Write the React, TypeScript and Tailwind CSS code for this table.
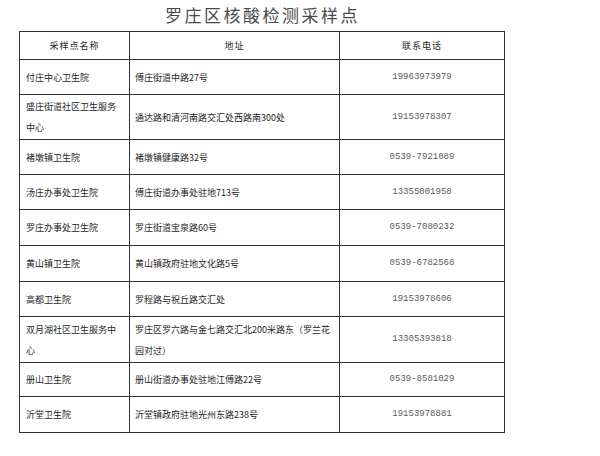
const rows: { name: string; addr: string; tel: string; h: string }[] = [
  { name: "付庄中心卫生院", addr: "傅庄街道中路27号", tel: "19963973979", h: "h-[35px]" },
  { name: "盛庄街道社区卫生服务中心", addr: "通达路和清河南路交汇处西路南300处", tel: "19153978307", h: "h-[45px]" },
  { name: "褚墩镇卫生院", addr: "褚墩镇健康路32号", tel: "0539-7921089", h: "h-[35px]" },
  { name: "汤庄办事处卫生院", addr: "傅庄街道办事处驻地713号", tel: "13355001958", h: "h-[35px]" },
  { name: "罗庄办事处卫生院", addr: "罗庄街道宝泉路60号", tel: "0539-7080232", h: "h-[36px]" },
  { name: "黄山镇卫生院", addr: "黄山镇政府驻地文化路5号", tel: "0539-6782568", h: "h-[36px]" },
  { name: "高都卫生院", addr: "罗程路与祝丘路交汇处", tel: "19153978606", h: "h-[35px]" },
  { name: "双月湖社区卫生服务中心", addr: "罗庄区罗六路与金七路交汇北200米路东（罗兰花园对过）", tel: "13305393818", h: "h-[46px]" },
  { name: "册山卫生院", addr: "册山街道办事处驻地江傅路22号", tel: "0539-8581029", h: "h-[34px]" },
  { name: "沂堂卫生院", addr: "沂堂镇政府驻地光州东路238号", tel: "19153978881", h: "h-[36px]" },
];

export default function App() {
  return (
    <div className="w-[600px] h-[456px] bg-white text-[#262626] font-['Noto_Sans_CJK_SC',sans-serif]">
      <div className="ml-[19px] w-[485px]">
        <div className="h-[31px] pl-[2px] text-center text-[17px] leading-[30px] tracking-[2.5px] text-[#4a4a4a]">
          罗庄区核酸检测采样点
        </div>
        <table className="w-[485px] table-fixed border-collapse border border-[#2a2a2a] text-[9px] leading-[21px]">
          <colgroup>
            <col className="w-[110px]" />
            <col className="w-[210px]" />
            <col className="w-[165px]" />
          </colgroup>
          <thead>
            <tr className="h-[28px]">
              <th className="border border-[#333] font-normal tracking-[1px] text-center">采样点名称</th>
              <th className="border border-[#333] font-normal tracking-[1px] text-center">地址</th>
              <th className="border border-[#333] font-normal tracking-[1px] text-center">联系电话</th>
            </tr>
          </thead>
          <tbody>
            {rows.map((r) => (
              <tr key={r.name} className={r.h}>
                <td className="border border-[#333] pl-[6px] pr-[6px] align-middle break-all">{r.name}</td>
                <td className="border border-[#333] pl-[5px] pr-[5px] align-middle break-all">{r.addr}</td>
                <td className="border border-[#333] text-center align-middle font-['Liberation_Mono',monospace] text-[#5a5a5a]">
                  {r.tel}
                </td>
              </tr>
            ))}
          </tbody>
        </table>
      </div>
    </div>
  );
}
